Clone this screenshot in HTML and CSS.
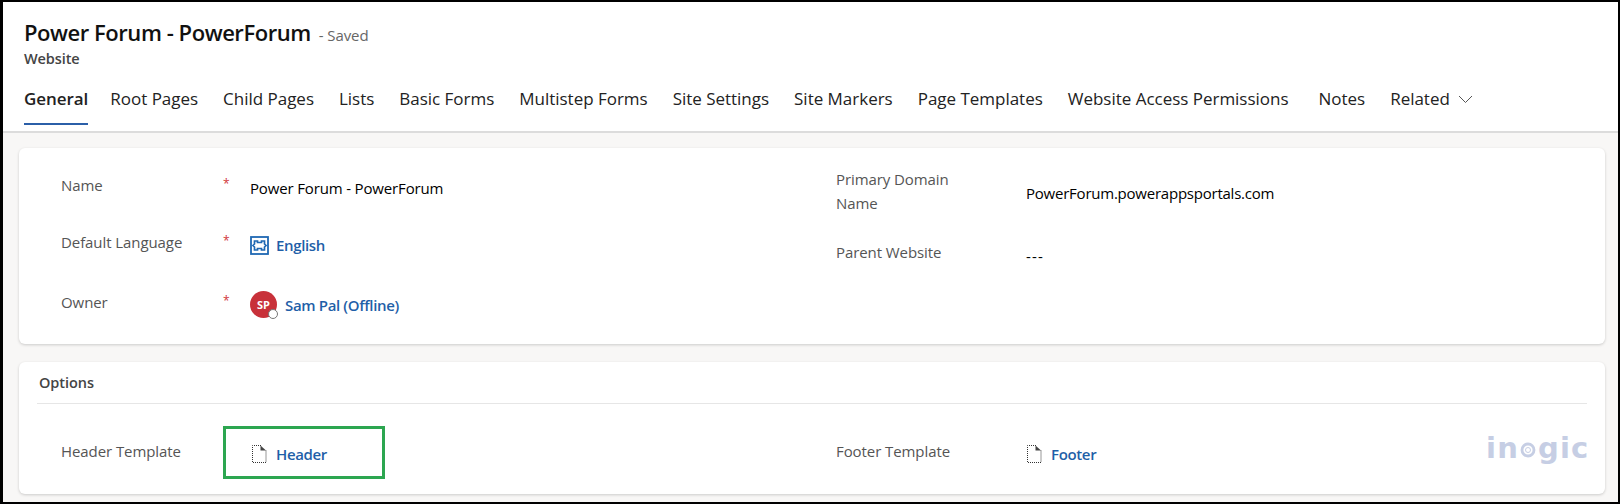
FILE: index.html
```html
<!DOCTYPE html>
<html lang="en">
<head>
<meta charset="utf-8">
<title>Power Forum - PowerForum</title>
<link rel="stylesheet" href="styles.css">
</head>
<body>
<div class="frame">
  <header class="head">
    <div class="title-row"><h1 class="title">Power Forum - PowerForum</h1><span class="saved">- Saved</span></div>
    <div class="entity">Website</div>
    <nav class="tabs">
      <span class="tab active">General</span>
      <span class="tab">Root Pages</span>
      <span class="tab">Child Pages</span>
      <span class="tab">Lists</span>
      <span class="tab">Basic Forms</span>
      <span class="tab">Multistep Forms</span>
      <span class="tab">Site Settings</span>
      <span class="tab">Site Markers</span>
      <span class="tab">Page Templates</span>
      <span class="tab">Website Access Permissions</span>
      <span class="tab tab-notes">Notes</span>
      <span class="tab tab-related">Related
        <svg class="chev" width="15" height="9" viewBox="0 0 15 9"><path d="M1 1l6.500 6.500L14 1" fill="none" stroke="#555" stroke-width="1"/></svg>
      </span>
    </nav>
  </header>
  <main class="content">
    <section class="card card-main">
      <div class="col col-left">
        <div class="field f-name"><span class="label">Name</span><span class="star">*</span><span class="value">Power Forum - PowerForum</span></div>
        <div class="field f-lang"><span class="label">Default Language</span><span class="star">*</span>
          <span class="value link">
            <svg class="ico-lang" width="19" height="19" viewBox="0 0 19 19"><rect x="1" y="1" width="17" height="17" fill="none" stroke="#1f68b3" stroke-width="1.800"/><path d="M4.500 5h3v1.500h4V5h3v3l1.500 1.500L14.500 11v3h-3v-1.500h-4V14h-3v-3L3 9.500 4.500 8z" fill="none" stroke="#1f68b3" stroke-width="1.700"/></svg>
            English</span></div>
        <div class="field f-owner"><span class="label">Owner</span><span class="star">*</span>
          <span class="value link"><span class="avatar">SP<span class="presence"></span></span>Sam Pal (Offline)</span></div>
      </div>
      <div class="col col-right">
        <div class="field f-domain"><span class="label label-wide">Primary Domain<br>Name</span><span class="value">PowerForum.powerappsportals.com</span></div>
        <div class="field f-parent"><span class="label label-wide">Parent Website</span><span class="value value-empty">---</span></div>
      </div>
    </section>
    <section class="card card-options">
      <h2 class="section-title">Options</h2>
      <div class="options-row">
        <div class="field f-header"><span class="label">Header Template</span>
          <span class="highlight"><span class="value link">
            <svg class="ico-doc" width="15" height="18" viewBox="0 0 15 18"><path d="M9 .5H.5v17h13.500V5.500" fill="none" stroke="#333" stroke-width="1" stroke-dasharray="1 1"/><path d="M8.500 .5L14 5.500H8.500z" fill="#444"/></svg>
            Header</span></span></div>
        <div class="field f-footer"><span class="label label-wide">Footer Template</span>
          <span class="value link">
            <svg class="ico-doc" width="15" height="18" viewBox="0 0 15 18"><path d="M9 .5H.5v17h13.500V5.500" fill="none" stroke="#333" stroke-width="1" stroke-dasharray="1 1"/><path d="M8.500 .5L14 5.500H8.500z" fill="#444"/></svg>
            Footer</span></div>
      </div>
      <div class="watermark">in<svg class="wm-o" width="19" height="16" viewBox="0 0 19 16"><circle cx="9" cy="8" r="6" fill="none" stroke="#c6cee4" stroke-width="2.800"/><circle cx="9" cy="8" r="2.500" fill="none" stroke="#c6cee4" stroke-width="1"/></svg>gic</div>
    </section>
  </main>
</div>
</body>
</html>
```
FILE: styles.css
```css
* { box-sizing: border-box; }
html, body { margin: 0; height: 100%; background: #000; }
body { font-family: "Open Sans", "Noto Sans", sans-serif; overflow: hidden; }
.frame {
  margin: 2px 2px 2px 3px;
  height: 500px;
  background: #f8f7f6;
  display: flex;
  flex-direction: column;
  overflow: hidden;
}
.head {
  height: 131px;
  flex: none;
  background: #fff;
  border-bottom: 2px solid #dcdcdc;
  padding: 16px 0 0 21px;
}
.title-row { display: flex; align-items: baseline; height: 29px; }
.title { margin: 0; font-size: 22px; line-height: 29px; font-weight: 600; color: #111; letter-spacing: -.45px; }
.saved { font-size: 15px; color: #666; margin-left: 8px; letter-spacing: -.1px; }
.entity { font-size: 14.500px; line-height: 20px; margin-top: 2px; font-weight: 600; color: #444; letter-spacing: -.1px; }
.tabs { display: flex; align-items: flex-start; margin-top: 19px; height: 39px; }
.tab {
  font-size: 17px;
  line-height: 22px;
  color: #222;
  margin-right: 25px;
  letter-spacing: -.02px;
  position: relative;
  white-space: nowrap;
}
.tab.active { font-weight: 600; color: #222; letter-spacing: -.05px; margin-right: 22px; }
.tab.active::after {
  content: "";
  position: absolute;
  left: 0; right: 0; top: 35px;
  height: 2px;
  background: #2b5fa8;
}
.tab-notes { margin-left: 5px; }
.tab-related { display: flex; align-items: center; gap: 8px; margin-right: 0; }
.content { flex: 1; padding: 15px 13px 0 16px; display: flex; flex-direction: column; gap: 18px; }
.card {
  background: #fff;
  border-radius: 6px;
  box-shadow: 0 1px 3px rgba(0,0,0,.18);
  flex: none;
}
.card-main { height: 196px; display: grid; grid-template-columns: 775px 1fr; padding: 0 0 0 42px; }
.card-options { height: 132px; position: relative; padding: 0 18px; }
.col { display: flex; flex-direction: column; }
.field { display: flex; align-items: flex-start; font-size: 15px; }
.label { width: 163px; flex: none; color: #555; line-height: 24px; letter-spacing: -.08px; }
.label-wide { width: 190px; }
.star { width: 26px; flex: none; color: #d13438; line-height: 20px; font-size: 12px; margin-top: 1px; margin-left: -1px; }
.value { color: #000; line-height: 24px; display: inline-flex; align-items: center; letter-spacing: -.15px; font-weight: 500; }
.link { color: #1f5fa8; font-weight: 600; letter-spacing: -.35px; }
.f-name { margin-top: 25px; }
.f-name .value { margin-top: 3px; margin-left: 1px; }
.f-lang { margin-top: 30px; }
.f-lang .value { margin-top: 3px; margin-left: 1px; }
.ico-lang { margin-right: 7px; }
.f-owner { margin-top: 33px; }
.f-owner .value { margin-top: 1px; margin-left: 1px; }
.avatar {
  width: 27px; height: 27px;
  border-radius: 50%;
  background: #c8313a;
  color: #fff;
  font-size: 11px;
  font-weight: 700;
  letter-spacing: 0;
  display: flex;
  align-items: center;
  justify-content: center;
  position: relative;
  margin-right: 8px;
}
.presence {
  position: absolute;
  right: -1px; bottom: -1px;
  width: 10px; height: 10px;
  border-radius: 50%;
  background: #fff;
  border: 1.500px solid #777;
}
.f-domain { margin-top: 19px; align-items: center; }
.f-domain .value { margin-top: 4px; letter-spacing: -.23px; }
.f-parent { margin-top: 25px; }
.f-parent .value { margin-top: 4px; }
.f-parent .value-empty { font-weight: 400; letter-spacing: 1.200px; }
.section-title { margin: 0; padding: 11px 0 0 2px; height: 42px; border-bottom: 1px solid #e6e6e6; font-size: 14.500px; line-height: 20px; font-weight: 600; color: #444; letter-spacing: -.05px; }
.options-row { display: grid; grid-template-columns: 775px 1fr; padding-left: 24px; }
.f-header { margin-top: 22px; }
.f-header .label { width: 162px; margin-top: 15px; line-height: 20px; }
.highlight {
  width: 162px; height: 53px;
  border: 3px solid #2ca650;
  padding: 13px 0 0 26px;
  flex: none;
}
.ico-doc { margin-right: 9px; }
.f-footer { margin-top: 37px; }
.f-footer .label { line-height: 20px; }
.f-footer .value { margin-top: 1px; margin-left: 1px; }
.watermark {
  position: absolute;
  left: 1467px; top: 69px;
  font-family: "DejaVu Sans", sans-serif;
  font-weight: 700;
  font-size: 29px;
  line-height: 34px;
  letter-spacing: 1.200px;
  color: #c6cee4;
  display: flex;
  align-items: center;
}
.wm-o { flex: none; margin-top: 4px; }
```
